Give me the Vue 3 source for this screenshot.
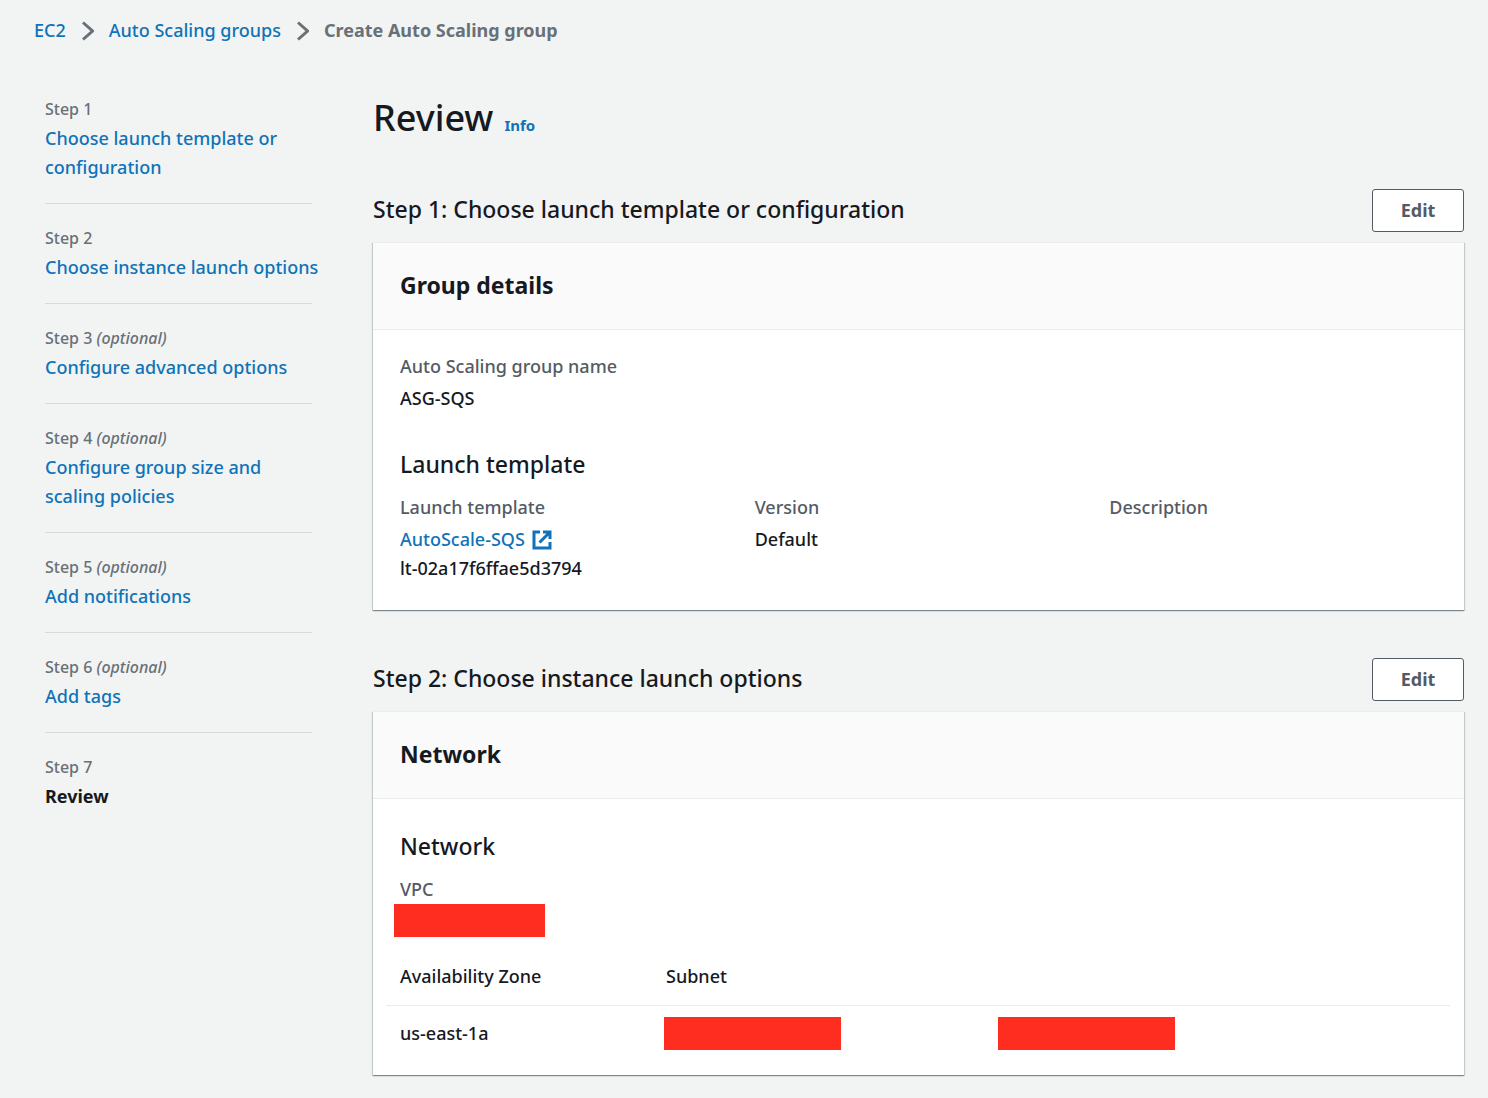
<script setup>
const steps = [
  { n: 1, title: 'Choose launch template or configuration' },
  { n: 2, title: 'Choose instance launch options' },
  { n: 3, title: 'Configure advanced options', optional: true },
  { n: 4, title: 'Configure group size and scaling policies', optional: true },
  { n: 5, title: 'Add notifications', optional: true },
  { n: 6, title: 'Add tags', optional: true },
  { n: 7, title: 'Review', current: true },
]
</script>

<template>
  <div class="page">
    <nav class="crumbs" aria-label="Breadcrumbs">
      <a href="#">EC2</a>
      <svg class="chevron" viewBox="0 0 12 20" aria-hidden="true"><path d="M1 1.500 10.500 10 1 18.500" /></svg>
      <a href="#">Auto Scaling groups</a>
      <svg class="chevron" viewBox="0 0 12 20" aria-hidden="true"><path d="M1 1.500 10.500 10 1 18.500" /></svg>
      <strong>Create Auto Scaling group</strong>
    </nav>

    <div class="layout">
      <nav class="steps" aria-label="Steps">
        <ol>
          <li v-for="s in steps" :key="s.n">
            <div class="step-label">Step {{ s.n }} <em v-if="s.optional">(optional)</em></div>
            <div class="step-title">
              <strong v-if="s.current">{{ s.title }}</strong>
              <a v-else href="#">{{ s.title }}</a>
            </div>
          </li>
        </ol>
      </nav>

      <main>
        <div class="title">
          <h1>Review</h1>
          <a href="#">Info</a>
        </div>

        <section>
          <header class="section-head">
            <h2>Step 1: Choose launch template or configuration</h2>
            <button type="button">Edit</button>
          </header>
          <div class="panel">
            <div class="panel-head"><h3>Group details</h3></div>
            <div class="panel-body">
              <dl class="field">
                <dt>Auto Scaling group name</dt>
                <dd>ASG-SQS</dd>
              </dl>
              <h4 class="spaced">Launch template</h4>
              <div class="columns">
                <dl class="field">
                  <dt>Launch template</dt>
                  <dd>
                    <a class="external" href="#">AutoScale-SQS
                      <svg viewBox="0 0 20 20" aria-hidden="true"><path d="M8 2H2v16h16v-6M11 2h7v7M18 2 7.500 12.500" /></svg>
                    </a>
                  </dd>
                  <dd>lt-02a17f6ffae5d3794</dd>
                </dl>
                <dl class="field">
                  <dt>Version</dt>
                  <dd>Default</dd>
                </dl>
                <dl class="field">
                  <dt>Description</dt>
                </dl>
              </div>
            </div>
          </div>
        </section>

        <section>
          <header class="section-head">
            <h2>Step 2: Choose instance launch options</h2>
            <button type="button">Edit</button>
          </header>
          <div class="panel">
            <div class="panel-head"><h3>Network</h3></div>
            <div class="panel-body network">
              <h4>Network</h4>
              <dl class="field">
                <dt>VPC</dt>
                <dd><span class="redacted vpc"></span></dd>
              </dl>
              <table>
                <colgroup><col class="zone" /><col class="subnet" /><col /></colgroup>
                <thead>
                  <tr><th scope="col">Availability Zone</th><th scope="col" colspan="2">Subnet</th></tr>
                </thead>
                <tbody>
                  <tr>
                    <td>us-east-1a</td>
                    <td class="covered"><span class="redacted"></span></td>
                    <td class="covered"><span class="redacted"></span></td>
                  </tr>
                </tbody>
              </table>
            </div>
          </div>
        </section>
      </main>
    </div>
  </div>
</template>

<style>
body {
  margin: 0;
  background: #f2f4f3;
}
</style>

<style scoped>
.page {
  padding: 16px 24px 22px 34px;
  font: 475 18px/29px "Noto Sans", "Open Sans", sans-serif;
  color: #16191f;
}
h1, h2, h3, h4, dl, dd, ol {
  margin: 0;
  padding: 0;
}
a {
  color: #0f73b9;
  text-decoration: none;
}
.crumbs {
  display: flex;
  align-items: center;
  color: #687078;
}
.chevron {
  width: 12px;
  height: 20px;
  margin: 0 15px 0 16px;
  fill: none;
  stroke: #687078;
  stroke-width: 3;
}
.layout {
  display: flex;
  gap: 61px;
  padding: 50px 0 0 11px;
}
.steps {
  flex: none;
  width: 267px;
}
.steps ol {
  list-style: none;
}
.steps li {
  padding: 20px 0 21px;
  border-bottom: 1px solid #d5dbdb;
}
.steps li:first-child {
  padding-top: 0;
}
.steps li:last-child {
  border: 0;
}
.step-label {
  font-size: 16px;
  color: #687078;
}
.step-title {
  margin-right: -12px;
}
main {
  flex: 1;
  min-width: 0;
}
.title {
  display: flex;
  align-items: baseline;
  gap: 11px;
  margin-bottom: 48px;
}
h1 {
  font-size: 36px;
  font-weight: 475;
  line-height: 46px;
}
.title a {
  font-size: 15px;
  font-weight: 700;
}
section + section {
  margin-top: 48px;
}
.section-head {
  display: flex;
  align-items: center;
  justify-content: space-between;
  margin-bottom: 10px;
}
h2, h3, h4 {
  font-size: 23px;
  line-height: 32px;
}
h2, h4 {
  font-weight: 475;
}
h2 {
  padding-bottom: 3px;
}
h3 {
  font-weight: 700;
}
button {
  width: 92px;
  height: 43px;
  padding: 0;
  border: 1px solid #545b64;
  border-radius: 3px;
  background: #fff;
  color: #545b64;
  font: inherit;
  font-weight: 700;
}
.panel {
  border-top: 1px solid #eaeded;
  background: #fff;
  box-shadow: 0 1px 1px #001c244d, 1px 1px 1px #001c2426, -1px 1px 1px #001c2426;
}
.panel-head {
  padding: 26px 27px 28px;
  border-bottom: 1px solid #eaeded;
  background: #fafafa;
}
.panel-body {
  padding: 22px 14px 27px 13px;
}
.panel-body.network {
  padding: 31px 14px 14px 13px;
}
h4 {
  margin: 0 14px 13px;
}
h4.spaced {
  margin-top: 35px;
}
.columns {
  display: grid;
  grid-template-columns: repeat(3, 1fr);
}
.field {
  padding: 0 14px;
}
dt {
  margin-bottom: 3px;
  color: #545b64;
}
.external {
  display: inline-flex;
  align-items: center;
  gap: 7px;
}
.external svg {
  width: 20px;
  height: 20px;
  fill: none;
  stroke: currentColor;
  stroke-width: 3;
}
.redacted {
  display: block;
  width: 177px;
  height: 33px;
  background: #ff2d20;
}
.vpc {
  width: 151px;
  margin: -3px -6px;
}
table {
  width: 100%;
  margin-top: 14px;
  border-collapse: collapse;
  table-layout: fixed;
}
.zone {
  width: 25%;
}
.subnet {
  width: 31.4%;
}
th, td {
  padding: 0 14px;
  text-align: left;
}
th {
  height: 57px;
  border-bottom: 1px solid #eaeded;
  box-sizing: border-box;
  font-weight: 475;
}
td {
  height: 56px;
  box-sizing: border-box;
}
td.covered {
  padding: 0 12px;
}
</style>
